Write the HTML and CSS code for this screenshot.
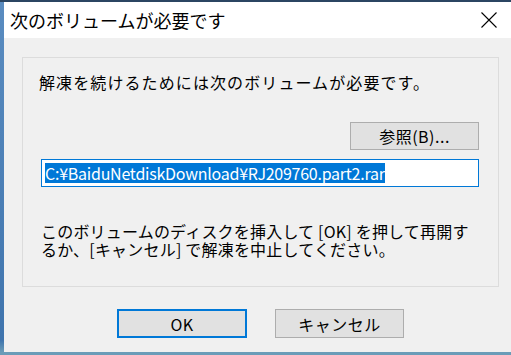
FILE: index.html
```html
<!DOCTYPE html>
<html lang="ja">
	<head>
		<meta charset="UTF-8" />
		<meta name="viewport" content="width=device-width, initial-scale=1.0" />
		<title>次のボリュームが必要です</title>
		<link rel="stylesheet" href="styles.css">
	</head>
	<body>
		<div id="desk">
			<div id="dialog">
				<div class="titlebar">
					<span class="title">次のボリュームが必要です</span>
					<svg class="close" width="16" height="16" viewBox="0 0 16 16">
						<path d="M0.5 0.5 L15.5 15.5 M15.5 0.5 L0.5 15.5" stroke="#000" stroke-width="1.1" fill="none" />
					</svg>
				</div>
				<div class="content">
					<div class="group">
						<div class="lead">解凍を続けるためには次のボリュームが必要です。</div>
						<div class="browse-row">
							<button class="btn btn-browse">参照(B)...</button>
						</div>
						<div class="path">
							<span class="selected">C:¥BaiduNetdiskDownload¥RJ209760.part2.rar</span>
						</div>
						<p class="note">このボリュームのディスクを挿入して [OK] を押して再開す<br />るか、[キャンセル] で解凍を中止してください。</p>
					</div>
					<div class="actions">
						<button class="btn btn-ok">OK</button>
						<button class="btn">キャンセル</button>
					</div>
				</div>
			</div>
		</div>
	</body>
</html>
```

FILE: styles.css
```css
body {
	margin: 0;
	overflow: hidden;
	width: 511px;
	height: 355px;
	font-family: "Noto Sans CJK JP", "Noto Sans", sans-serif;
	color: #000;
}

#desk {
	box-sizing: border-box;
	height: 355px;
	padding: 2px 0 3px 4px;
	background: linear-gradient(to bottom, #2b4562 0, #2b4562 2px, #5a8cc0 2px, #3f74ad 340px, #6a9cb8 352px);
}

#dialog {
	display: flex;
	flex-direction: column;
	height: 350px;
	background-color: #f0f0f0;
}

.titlebar {
	display: flex;
	align-items: center;
	justify-content: space-between;
	height: 36px;
	padding: 0 14px 0 6px;
	background-color: #fff;
}

.title {
	font-size: 18px;
}

.close {
	display: block;
}

.content {
	display: flex;
	flex-direction: column;
	padding: 19px 12px 0 18px;
}

.group {
	box-sizing: border-box;
	height: 230px;
	padding: 14px 19px 0 18px;
	border: 1px solid #dcdcdc;
	font-size: 16px;
}

.lead {
	line-height: 20px;
	margin-left: -2px;
	letter-spacing: 1.1px;
}

.browse-row {
	display: flex;
	justify-content: flex-end;
	margin-top: 30px;
}

.btn {
	box-sizing: border-box;
	width: 129px;
	height: 29px;
	padding: 0;
	border: 1px solid #adadad;
	background-color: #e1e1e1;
	font-family: "Noto Sans CJK JP", "Noto Sans", sans-serif;
	font-size: 16px;
	color: #000;
	letter-spacing: 0.5px;
}

.btn-browse {
	height: 28px;
}

.path {
	box-sizing: border-box;
	height: 28px;
	margin-top: 9px;
	padding: 0 0 0 3px;
	border: 1px solid #0078d7;
	background-color: #fff;
	font-size: 16px;
	line-height: 24px;
	display: flex;
	align-items: center;
}

.selected {
	background-color: #0078d7;
	color: #fff;
	line-height: 20px;
	letter-spacing: -0.25px;
}

.note {
	margin: 35px 0 0;
	line-height: 18px;
	letter-spacing: 0.2px;
	white-space: nowrap;
}

.actions {
	display: flex;
	gap: 28px;
	margin-top: 22px;
	padding-left: 95px;
}

.btn-ok {
	width: 130px;
	border: 2px solid #0078d7;
}
```
